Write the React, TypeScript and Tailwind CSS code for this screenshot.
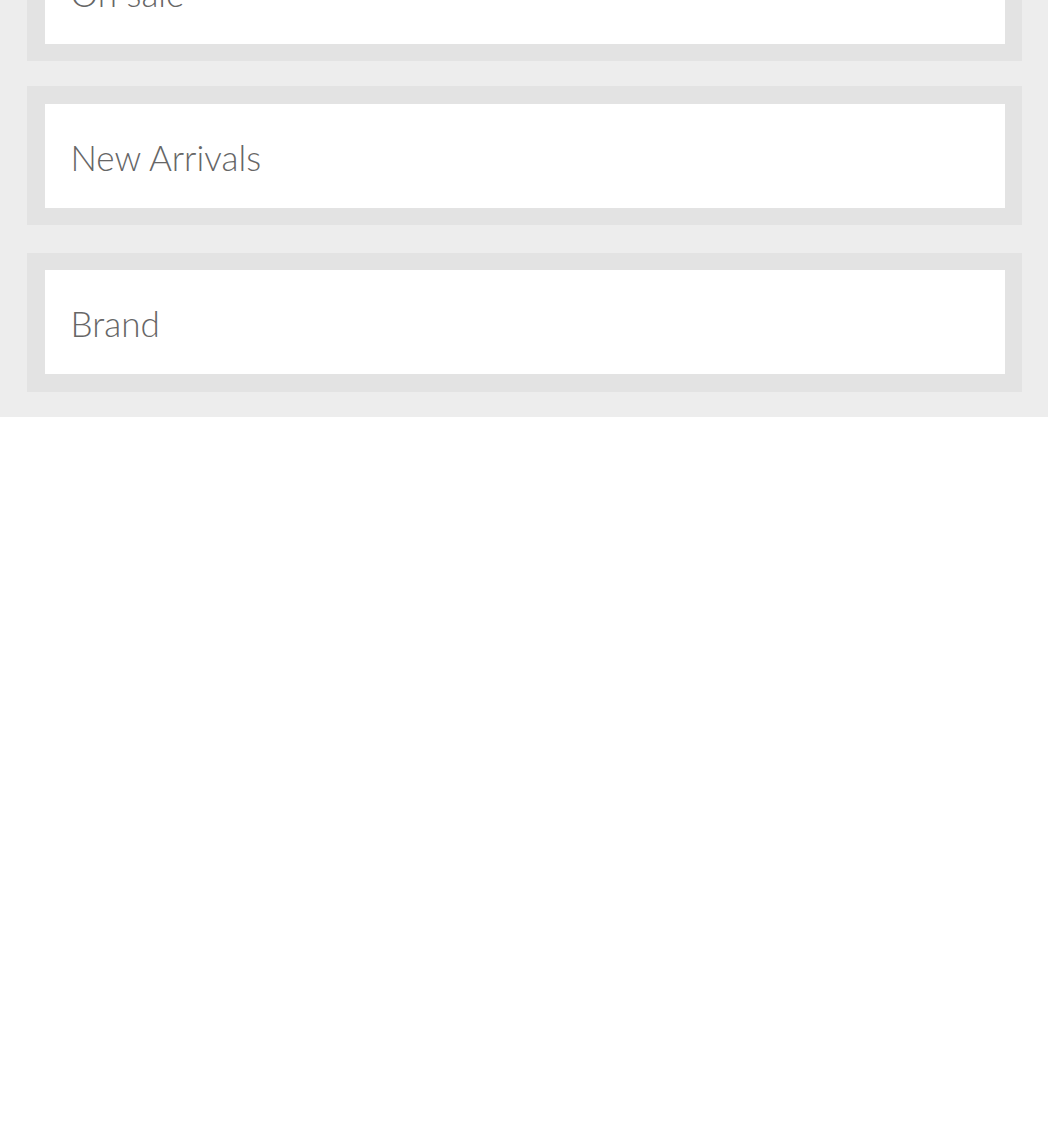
const items = ["On sale", "New Arrivals", "Brand"];

export default function App() {
  return (
    <div className="min-h-[1130px] bg-white" style={{ fontFamily: "Lato, 'Open Sans', sans-serif" }}>
      <div className="flex flex-col overflow-hidden bg-[#ededed] pl-[27px] pr-[26px] pb-[25px]">
        {items.map((label, i) => (
          <div
            key={label}
            className={
              i === 0
                ? "-mt-[78px] bg-[#e3e3e3] p-[17.5px]"
                : i === 1
                ? "mt-[25px] bg-[#e3e3e3] p-[17.5px]"
                : "mt-[27.5px] bg-[#e3e3e3] p-[17.5px]"
            }
          >
            <div className="flex h-[104px] items-center bg-white pl-[26px] pt-[3px]">
              <span className="text-[35px] font-light leading-none text-[#666]">{label}</span>
            </div>
          </div>
        ))}
      </div>
    </div>
  );
}
